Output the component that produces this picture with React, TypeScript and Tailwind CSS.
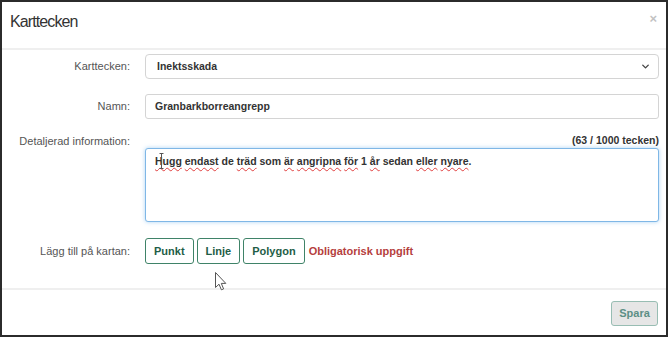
import { ChevronDown } from 'lucide-react';

const spellWords = new Set(['Hugg', 'endast', 'träd', 'är', 'angripna', 'för', 'år', 'eller', 'nyare']);

const detailText = 'Hugg endast de träd som är angripna för 1 år sedan eller nyare.';

function Label({ children }: { children: React.ReactNode }) {
  return (
    <div className="w-[128px] shrink-0 text-right text-[11px] leading-[13px] text-[#555]">
      {children}
    </div>
  );
}

function MapButton({ label }: { label: string }) {
  return (
    <button className="h-[26px] px-[8px] rounded-[3px] border border-[#3f8368] bg-white text-[11px] font-bold text-[#1f5e47]">
      {label}
    </button>
  );
}

export default function App() {
  const words = detailText.split(' ');

  return (
    <div className="w-[670px] h-[338px] bg-white" style={{ fontFamily: '"Liberation Sans", Arial, sans-serif' }}>
      <div className="relative w-[668px] h-[337px] border-2 border-[#2b2b2b] flex flex-col">
        {/* Header */}
        <div className="h-[48px] shrink-0 flex items-start justify-between pl-2 pr-[9px] pt-[11px] border-b-2 border-[#efefef]">
          <h2 className="text-[16px] leading-[18px] text-[#333] tracking-[-0.9px]">Karttecken</h2>
          <span className="text-[13px] leading-[13px] text-[#c2c2c2] font-bold mt-[-1px]">×</span>
        </div>

        {/* Body */}
        <div className="flex-1 flex flex-col pt-[4px] pr-[7px]">
          <div className="flex items-center gap-[15px]">
            <Label>Karttecken:</Label>
            <div className="flex-1 h-[25px] flex items-center justify-between pl-[11px] pr-[7px] rounded-[4px] border border-[#d4d4d4] bg-white">
              <span className="text-[10.5px] font-bold text-[#333]">Inektsskada</span>
              <ChevronDown size={11} strokeWidth={3} className="text-[#444]" />
            </div>
          </div>

          <div className="flex items-center gap-[15px] mt-[15px]">
            <Label>Namn:</Label>
            <div className="flex-1 h-[25px] flex items-center pl-[9px] rounded-[3px] border border-[#d4d4d4] bg-white">
              <span className="text-[10.5px] font-bold text-[#333]">Granbarkborreangrepp</span>
            </div>
          </div>

          <div className="flex gap-[15px] mt-[15px]">
            <div className="pt-[1px]">
              <Label>Detaljerad information:</Label>
            </div>
            <div className="flex-1 flex flex-col">
              <div className="text-right text-[10.5px] leading-[13px] font-bold text-[#333]">(63 / 1000 tecken)</div>
              <div className="relative mt-[1px] h-[74px] rounded-[3px] border border-[#7fb7e6] bg-white pl-[9px] pt-[5px] text-[10.5px] leading-[14px] font-bold text-[#333] shadow-[0_0_4px_rgba(102,175,233,0.55)]">
                {words.map((w, i) => {
                  const core = w.replace('.', '');
                  const dot = w.endsWith('.') ? '.' : '';
                  return (
                    <span key={i}>
                      {spellWords.has(core) ? (
                        <span className="underline decoration-wavy decoration-[#e04040] decoration-[1px] underline-offset-[2px]">{core}</span>
                      ) : (
                        core
                      )}
                      {dot}
                      {i < words.length - 1 ? ' ' : ''}
                    </span>
                  );
                })}
                <svg className="absolute left-[13px] top-[4px]" width="5" height="16" viewBox="0 0 5 16">
                  <path d="M0.5 0.5h4M2.5 0.5v15M0.5 15.5h4" stroke="#555" strokeWidth="1" fill="none" />
                </svg>
              </div>
            </div>
          </div>

          <div className="flex items-center gap-[15px] mt-[16px]">
            <Label>Lägg till på kartan:</Label>
            <div className="flex items-center gap-[3px]">
              <MapButton label="Punkt" />
              <MapButton label="Linje" />
              <MapButton label="Polygon" />
              <span className="ml-[1px] text-[11px] font-bold text-[#b5403d]">Obligatorisk uppgift</span>
            </div>
          </div>
        </div>

        {/* Footer */}
        <div className="h-[47px] shrink-0 flex items-start justify-end pt-[11px] pr-[8px] border-t-2 border-[#efefef]">
          <button className="h-[25px] w-[47px] rounded-[3px] border border-[#98bdb3] bg-[#e6e6e6] text-[11px] font-bold text-[#5d8f85]">
            Spara
          </button>
        </div>

        {/* Mouse pointer */}
        <svg className="absolute left-[213px] top-[270px]" width="12" height="19" viewBox="0 0 12 19">
          <path d="M0.5 0.5 L0.5 15.5 L4 12.2 L6.4 17.8 L8.6 16.9 L6.3 11.4 L10.8 11.4 Z" fill="#fff" stroke="#555" strokeWidth="1" strokeLinejoin="round" />
        </svg>
      </div>
    </div>
  );
}
